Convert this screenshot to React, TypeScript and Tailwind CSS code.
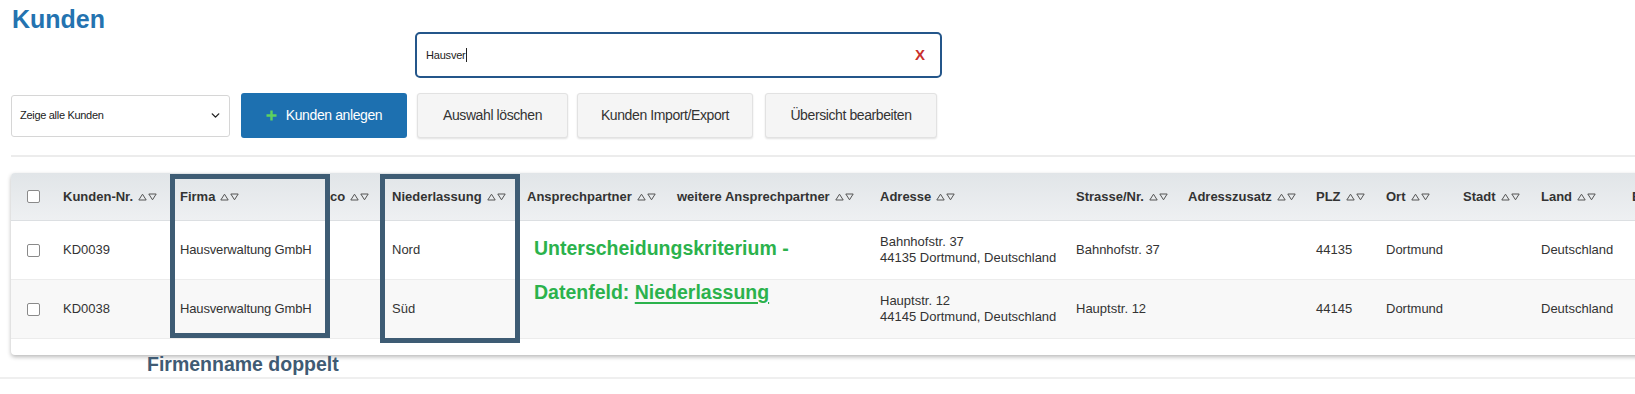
import { ChevronDown } from 'lucide-react';

const columns = [
  'Kunden-Nr.',
  'Firma',
  'co',
  'Niederlassung',
  'Ansprechpartner',
  'weitere Ansprechpartner',
  'Adresse',
  'Strasse/Nr.',
  'Adresszusatz',
  'PLZ',
  'Ort',
  'Stadt',
  'Land',
  'E-Mail',
];

type Row = {
  nr: string;
  firma: string;
  niederlassung: string;
  adresse: [string, string];
  strasse: string;
  plz: string;
  ort: string;
  land: string;
};

const rows: Row[] = [
  {
    nr: 'KD0039',
    firma: 'Hausverwaltung GmbH',
    niederlassung: 'Nord',
    adresse: ['Bahnhofstr. 37', '44135 Dortmund, Deutschland'],
    strasse: 'Bahnhofstr. 37',
    plz: '44135',
    ort: 'Dortmund',
    land: 'Deutschland',
  },
  {
    nr: 'KD0038',
    firma: 'Hausverwaltung GmbH',
    niederlassung: 'Süd',
    adresse: ['Hauptstr. 12', '44145 Dortmund, Deutschland'],
    strasse: 'Hauptstr. 12',
    plz: '44145',
    ort: 'Dortmund',
    land: 'Deutschland',
  },
];

const gridCols =
  'grid grid-cols-[40px_117px_150px_62px_135px_150px_203px_196px_112px_128px_70px_77px_78px_91px_120px]';

function SortIcon() {
  return (
    <svg width="19" height="8" viewBox="0 0 19 8" className="ml-[5px] shrink-0">
      <polygon points="0.8,7 4.5,1.2 8.2,7" fill="none" stroke="#555" strokeWidth="1" />
      <polygon points="10.8,1 18.2,1 14.5,6.8" fill="none" stroke="#555" strokeWidth="1" />
    </svg>
  );
}

function Checkbox() {
  return <span className="block w-[13px] h-[13px] border border-[#8a8a8a] rounded-[2px] bg-white" />;
}

function GreyButton({ label, className }: { label: string; className: string }) {
  return (
    <button
      className={`${className} h-[45px] bg-[#f5f5f5] border border-[#e2e2e2] rounded-[3px] shadow-[0_1px_2px_rgba(0,0,0,0.12)] text-[14px] tracking-[-0.4px] text-[#333]`}
    >
      {label}
    </button>
  );
}

export default function App() {
  return (
    <div className="relative w-[1635px] h-[394px] overflow-hidden bg-white font-['Liberation_Sans',Arial,sans-serif]">
      <h1 className="h-[32px] pt-[7px] pl-[12px] text-[25px] leading-[25px] font-bold text-[#2473b0]">Kunden</h1>

      {/* search */}
      <div className="ml-[415px] w-[527px] h-[46px] border-2 border-[#24568a] rounded-[5px] flex items-center pl-[9px] pr-[15px]">
        <span className="text-[11px] tracking-[-0.2px] text-[#222]">Hausver</span>
        <span className="w-px h-[14px] bg-[#222]" />
        <span className="ml-auto text-[15px] font-bold text-[#c9302c]">X</span>
      </div>

      {/* toolbar */}
      <div className="mt-[15px] ml-[11px] h-[45px] flex items-center">
        <div className="w-[219px] h-[42px] border border-[#d6d6d6] rounded-[3px] flex items-center justify-between pl-[8px] pr-[7px]">
          <span className="text-[11px] tracking-[-0.3px] text-[#222]">Zeige alle Kunden</span>
          <ChevronDown size={13} strokeWidth={2.6} className="text-[#222]" />
        </div>
        <button className="ml-[11px] w-[166px] h-[45px] bg-[#1d70b0] rounded-[3px] flex items-center justify-center gap-[9px] text-white text-[14px] tracking-[-0.4px]">
          <svg width="11" height="11" viewBox="0 0 11 11">
            <path d="M5.5 0.5v10M0.5 5.5h10" stroke="#5ed35e" strokeWidth="2.4" />
          </svg>
          <span>Kunden anlegen</span>
        </button>
        <GreyButton label="Auswahl löschen" className="ml-[10px] w-[151px]" />
        <GreyButton label="Kunden Import/Export" className="ml-[9px] w-[176px]" />
        <GreyButton label="Übersicht bearbeiten" className="ml-[12px] w-[172px]" />
      </div>

      <div className="mt-[17px] ml-[11px] h-[2px] bg-[#ececec]" />

      {/* table */}
      <div className="mt-[16px] ml-[11px] w-[1720px] bg-white rounded-[4px] shadow-[0_2px_4px_rgba(0,0,0,0.28)] overflow-hidden text-[#333]">
        <div
          className={`${gridCols} h-[48px] items-center bg-gradient-to-b from-[#e1e5e8] to-[#eef0f2] border-b border-[#dcdfe2] text-[13px] font-bold`}
        >
          <div className="pl-[16px]">
            <Checkbox />
          </div>
          {columns.map((c) => (
            <div key={c} className="pl-[12px] flex items-center whitespace-nowrap">
              <span>{c}</span>
              <SortIcon />
            </div>
          ))}
        </div>

        {rows.map((r, i) => (
          <div
            key={r.nr}
            className={`${gridCols} h-[59px] items-center border-b border-[#ececec] text-[13px] whitespace-nowrap ${
              i % 2 === 1 ? 'bg-[#f8f8f8]' : 'bg-white'
            }`}
          >
            <div className="pl-[16px]">
              <Checkbox />
            </div>
            <div className="pl-[12px]">{r.nr}</div>
            <div className="pl-[12px] tracking-[-0.15px]">{r.firma}</div>
            <div className="pl-[12px]" />
            <div className="pl-[12px]">{r.niederlassung}</div>
            <div className="pl-[12px]" />
            <div className="pl-[12px]" />
            <div className="pl-[12px] leading-[16px]">
              <div>{r.adresse[0]}</div>
              <div>{r.adresse[1]}</div>
            </div>
            <div className="pl-[12px]">{r.strasse}</div>
            <div className="pl-[12px]" />
            <div className="pl-[12px]">{r.plz}</div>
            <div className="pl-[12px]">{r.ort}</div>
            <div className="pl-[12px]" />
            <div className="pl-[12px]">{r.land}</div>
            <div className="pl-[12px]" />
          </div>
        ))}
        <div className="h-[16px]" />
      </div>

      <div className="mt-[22px] h-[2px] bg-[#efefef]" />

      {/* annotations */}
      <div className="absolute left-[170px] top-[174px] w-[160px] h-[164px] border-[5px] border-[#3e5c74]" />
      <div className="absolute left-[380px] top-[174px] w-[140px] h-[169px] border-[5px] border-[#3e5c74]" />
      <div className="absolute left-[534px] top-[238px] text-[19.5px] leading-[20px] font-bold text-[#2bb24c] whitespace-nowrap">
        Unterscheidungskriterium -
      </div>
      <div className="absolute left-[534px] top-[282px] text-[19.5px] leading-[20px] font-bold text-[#2bb24c] whitespace-nowrap">
        Datenfeld: <span className="underline decoration-2 underline-offset-[3px]">Niederlassung</span>
      </div>
      <div className="absolute left-[147px] top-[354px] text-[19.5px] leading-[20px] font-bold text-[#3f5b74] whitespace-nowrap">
        Firmenname doppelt
      </div>
    </div>
  );
}
